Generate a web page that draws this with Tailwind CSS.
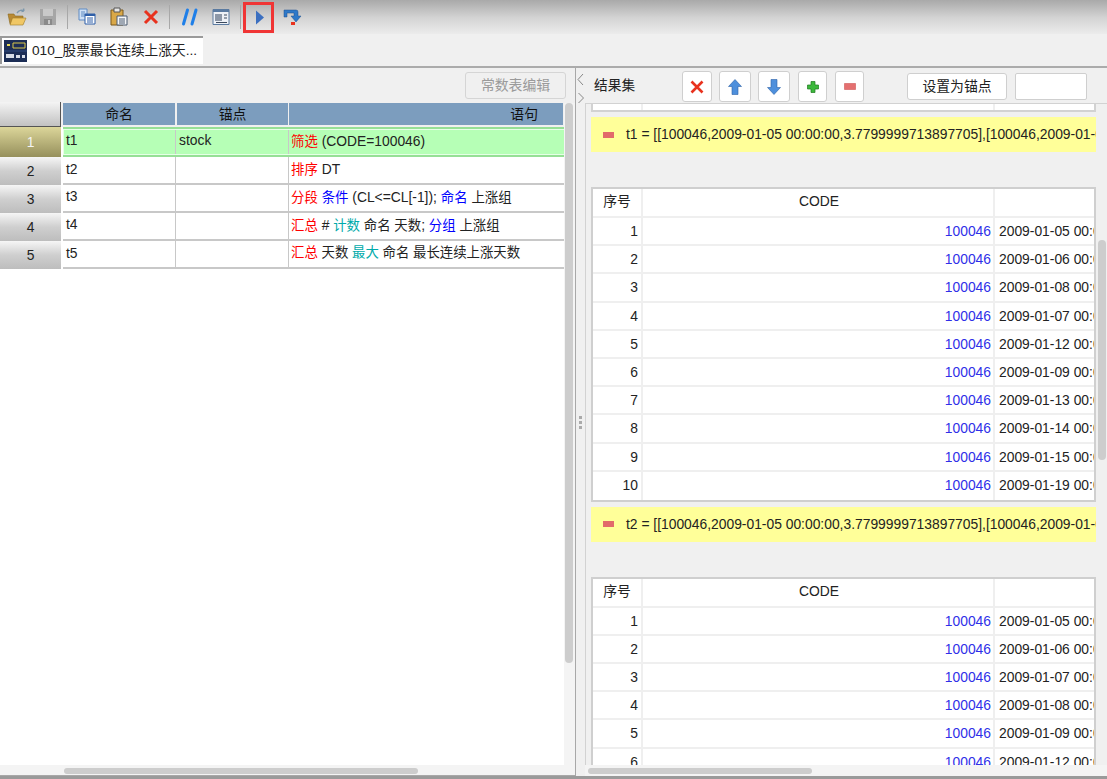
<!DOCTYPE html>
<html lang="zh">
<head>
    <meta charset="UTF-8">
    <title>010_股票最长连续上涨天数</title>
    <script src="https://cdn.jsdelivr.net/npm/@tailwindcss/browser@4"></script>
</head>
<body class="h-[779px] w-[1107px] overflow-hidden bg-[#f0f0f0] text-[13.85px] text-[#222] font-['Liberation_Sans','Noto_Sans_CJK_SC',sans-serif]">

    <!-- toolbar -->
    <div class="flex h-[34px] items-center bg-gradient-to-b from-[#a9a9a9] via-[#d2d2d2] to-[#ececec] pl-[7px]">
        <svg class="w-[20px] h-[20px]" viewBox="0 0 20 20">
            <path d="M1 7h6l1 2h8v8H3z" fill="#b98a34" stroke="#8a6a20" stroke-width=".6"/>
            <path d="M3 18l2.500-7H19l-3 7z" fill="#f0c765" stroke="#a07c28" stroke-width=".6"/>
            <path d="M10 6c2-3 5-3.500 7-2M17 4l-.5-2.500M17 4l-2.500.5" fill="none" stroke="#7c97ab" stroke-width="1.400"/>
        </svg>
        <svg class="ml-[11px] w-[20px] h-[20px]" viewBox="0 0 20 20"><path d="M2 2h16v16H2z" fill="#a6a6a6"/><path d="M5 2h10v7H5z" fill="#c9c9c9"/><path d="M6 12h8v6H6z" fill="#8a8a8a"/><path d="M10 13h2v4h-2z" fill="#c9c9c9"/></svg>
        <div class="ml-[9px] h-[24px] w-px bg-[#a8a8a8]"></div>
        <svg class="ml-[9px] w-[20px] h-[20px]" viewBox="0 0 20 20"><path d="M2 2h8v11H2z" fill="#cfe0f5" stroke="#5f8bc4"/><path d="M4 5h4M4 7h4M4 9h4" stroke="#5f8bc4"/><path d="M8 7h10v10H8z" fill="#fff" stroke="#2f5fa8"/><path d="M8 7h10v2H8z" fill="#2f5fa8"/><path d="M10 11h6M10 13h6M10 15h6" stroke="#2f5fa8"/></svg>
        <svg class="ml-[12px] w-[20px] h-[20px]" viewBox="0 0 20 20"><path d="M2 3h12v15H2z" fill="#d9a848" stroke="#7d5a1c"/><path d="M5 1h6v4H5z" fill="#e8e8e8" stroke="#555"/><path d="M8 9h10v9H8z" fill="#f4f6f8" stroke="#4a5a70"/><path d="M10 12h6M10 14h6M10 16h6" stroke="#4a5a70"/></svg>
        <svg class="ml-[12px] w-[20px] h-[20px]" viewBox="0 0 20 20"><path d="M4 4L16 16M16 4L4 16" stroke="#e8321e" stroke-width="3"/></svg>
        <div class="ml-[8px] h-[24px] w-px bg-[#a8a8a8]"></div>
        <svg class="ml-[10px] w-[20px] h-[20px]" viewBox="0 0 20 20"><path d="M7.500 3L3.500 17M16 3L12 17" stroke="#1f7fe8" stroke-width="3" stroke-linecap="round"/></svg>
        <svg class="ml-[11px] w-[20px] h-[20px]" viewBox="0 0 20 20"><path d="M2 2.500h16v15H2z" fill="#eef1f6" stroke="#5a7aa0"/><path d="M2 2.500h16v2.500H2z" fill="#5a7aa0"/><path d="M4 7h7v7H4z" fill="#8d98a8"/><path d="M13 8h3M13 11h3M5 15.500h11" stroke="#3c4a5e"/></svg>
        <div class="ml-[9px] h-[24px] w-px bg-[#a8a8a8]"></div>
        <div class="ml-[2px] flex h-[31px] w-[31px] items-center justify-center border-[3px] border-[#f03535]">
            <svg class="ml-[3px] w-[10px] h-[15px]" viewBox="0 0 10 15"><path d="M1 .5L9 7.500 1 14.500z" fill="#3b6fc0"/></svg>
        </div>
        <svg class="ml-[8px] w-[20px] h-[20px]" viewBox="0 0 20 20">
            <path d="M2 3h12q2 0 2 2v4h3l-5 6-5-6h3V6H5v4H2z" fill="#2f79c8" stroke="#1d4f8c" stroke-width=".5"/>
            <path d="M9 15h4v3H9z" fill="#e8321e"/>
        </svg>
    </div>

    <!-- tab strip -->
    <div class="h-[34px] border-b-[2px] border-[#ababab] pt-[2px]">
        <div class="flex h-[28px] w-[203px] items-center border-t-2 border-l-2 border-[#9a9a9a] bg-white pl-[2px]">
            <svg class="w-[23px] h-[22px] shrink-0" viewBox="0 0 23 22">
                <path d="M0 0h23v22H0z" fill="#1c2d55"/>
                <path d="M9 3h12v5H9z" fill="none" stroke="#d9c84a"/>
                <path d="M3 4h3v2H3z" fill="#e6d85a"/>
                <path d="M0 11h23" stroke="#2f4a80"/>
                <path d="M2 14h8v4H2zM12 15h4v3h-4zM18 15h3v3h-3z" fill="#d8dde8"/>
            </svg>
            <span class="ml-[5px] whitespace-nowrap text-[13.7px]">010_股票最长连续上涨天...</span>
        </div>
    </div>

    <div class="flex h-[708px]">

        <!-- left pane -->
        <div class="relative w-[576px] shrink-0 border-r border-b border-[#a8a8a8]">
            <div class="flex h-[34px] justify-end pr-[9px] pt-[4px]">
                <div class="flex h-[27px] w-[101px] items-center justify-center rounded-[3px] border border-[#d5d5d5] bg-[#f0f0f0] text-[#9a9a9a]">常数表编辑</div>
            </div>
            <div class="flex h-[663px] flex-col overflow-hidden bg-white">
                <div class="grid grid-cols-[61px_2px_112px_2px_111px_1px_274px] bg-[#f0f0f0] h-[25px]">
                    <div class="bg-gradient-to-b from-[#f4f4f4] to-[#c2c2c2] border-r border-b border-[#555]"></div>
                    <div></div>
                    <div class="mt-[1px] h-[22px] bg-[#7c9dbe] text-center leading-[22px] text-[#111]">命名</div>
                    <div></div>
                    <div class="mt-[1px] h-[22px] bg-[#7c9dbe] text-center leading-[22px] text-[#111]">锚点</div>
                    <div></div>
                    <div class="mt-[1px] h-[22px] bg-[#7c9dbe] pr-[25px] text-right leading-[22px] text-[#111]">语句</div>
                </div>

                <!-- row 1, selected -->
                <div class="flex h-[30px]">
                    <div class="flex w-[61px] items-center justify-center bg-gradient-to-b from-[#dcd69a] to-[#96905c] text-[#f4f4f4]">1</div>
                    <div class="ml-[2px] w-[501px] border-y-[2px] border-[#96e096]">
                        <div class="flex h-full border-y border-l border-[#e6ffe6] bg-[#b6ffb6]">
                            <div class="w-[112px] border-r border-[#c8c8c8] pl-[2px]">t1</div>
                            <div class="w-[113px] border-r border-[#c8c8c8] pl-[3px]">stock</div>
                            <div class="pl-[2px] pt-[1px]"><span class="text-[13.4px] text-[#f00]">筛选</span> (CODE=100046)</div>
                        </div>
                    </div>
                </div>

                <div class="flex h-[28px]">
                    <div class="flex w-[61px] items-center justify-center bg-gradient-to-b from-[#f6f6f6] via-[#cfcfcf] to-[#bdbdbd]">2</div>
                    <div class="ml-[2px] flex w-[501px] border-b-[2px] border-[#c8c8c8]">
                        <div class="w-[113px] border-r border-[#c8c8c8] pl-[3px] pt-[2px]">t2</div>
                        <div class="w-[113px] border-r border-[#c8c8c8]"></div>
                        <div class="pl-[2px] pt-[2px]"><span class="text-[13.4px] text-[#f00]">排序</span> DT</div>
                    </div>
                </div>
                <div class="flex h-[28px]">
                    <div class="flex w-[61px] items-center justify-center bg-gradient-to-b from-[#f6f6f6] via-[#cfcfcf] to-[#bdbdbd]">3</div>
                    <div class="ml-[2px] flex w-[501px] border-b-[2px] border-[#c8c8c8]">
                        <div class="w-[113px] border-r border-[#c8c8c8] pl-[3px] pt-[1px]">t3</div>
                        <div class="w-[113px] border-r border-[#c8c8c8]"></div>
                        <div class="pl-[2px] pt-[2px]"><span class="text-[13.4px] text-[#f00]">分段</span> <span class="text-[13.4px] text-[#00f]">条件</span> (CL&lt;=CL[-1]); <span class="text-[13.4px] text-[#00f]">命名</span> <span class="text-[13.4px]">上涨组</span></div>
                    </div>
                </div>
                <div class="flex h-[28px]">
                    <div class="flex w-[61px] items-center justify-center bg-gradient-to-b from-[#f6f6f6] via-[#cfcfcf] to-[#bdbdbd]">4</div>
                    <div class="ml-[2px] flex w-[501px] border-b-[2px] border-[#c8c8c8]">
                        <div class="w-[113px] border-r border-[#c8c8c8] pl-[3px] pt-[1px]">t4</div>
                        <div class="w-[113px] border-r border-[#c8c8c8]"></div>
                        <div class="pl-[2px] pt-[2px]"><span class="text-[13.4px] text-[#f00]">汇总</span> # <span class="text-[13.4px] text-[#00aaaa]">计数</span> <span class="text-[13.4px]">命名 天数</span>; <span class="text-[13.4px] text-[#00f]">分组</span> <span class="text-[13.4px]">上涨组</span></div>
                    </div>
                </div>
                <div class="flex h-[28px]">
                    <div class="flex w-[61px] items-center justify-center bg-gradient-to-b from-[#f6f6f6] via-[#cfcfcf] to-[#bdbdbd]">5</div>
                    <div class="ml-[2px] flex w-[501px] border-b-[2px] border-[#c8c8c8]">
                        <div class="w-[113px] border-r border-[#c8c8c8] pl-[3px] pt-[2px]">t5</div>
                        <div class="w-[113px] border-r border-[#c8c8c8]"></div>
                        <div class="pl-[2px] pt-[2px] text-[13.4px]"><span class="text-[#f00]">汇总</span> 天数 <span class="text-[#00aaaa]">最大</span> 命名 最长连续上涨天数</div>
                    </div>
                </div>
            </div>
            <!-- scrollbars -->
            <div class="absolute top-[35px] bottom-[10px] right-0 w-[11px] bg-[#f4f4f4]">
                <div class="ml-[1px] h-[560px] w-[8px] rounded-[4px] bg-[#cdcdcd]"></div>
            </div>
            <div class="absolute inset-x-0 bottom-0 h-[10px] bg-[#f4f4f4]">
                <div class="ml-[64px] mt-[3px] h-[6px] w-[354px] rounded-[3px] bg-[#cdcdcd]"></div>
            </div>
        </div>

        <!-- splitter -->
        <div class="relative w-[9px] shrink-0">
            <svg class="absolute left-0 top-0 w-[9px] h-[38px]" viewBox="0 0 9 38" fill="none" stroke="#888" stroke-width="1"><path d="M7 6L2 11.500 7 17M2.500 25L7.500 30 2.500 35"/></svg>
            <div class="absolute left-[3px] top-[348px] flex flex-col gap-[2px]">
                <div class="h-[3px] w-[3px] bg-[#aaa]"></div>
                <div class="h-[3px] w-[3px] bg-[#aaa]"></div>
                <div class="h-[3px] w-[3px] bg-[#aaa]"></div>
            </div>
        </div>

        <!-- result pane -->
        <div class="relative flex-1">
            <div class="flex h-[35px] items-center pt-[2px]">
                <span class="ml-[9px] w-[88px] text-[13.7px]">结果集</span>
                <div class="flex h-[31px] w-[30px] items-center justify-center rounded-[3px] border border-[#cfcfcf] bg-white">
                    <svg class="w-[16px] h-[16px]" viewBox="0 0 16 16"><path d="M2.500 2.500l11 11M13.500 2.500l-11 11" stroke="#e8321e" stroke-width="2.600"/></svg>
                </div>
                <div class="ml-[7px] flex h-[31px] w-[32px] items-center justify-center rounded-[3px] border border-[#cfcfcf] bg-white">
                    <svg class="w-[14px] h-[16px]" viewBox="0 0 14 16"><path d="M7 .5l6.500 7H10v8H4v-8H.5z" fill="#4d8fdc" stroke="#2c62a8" stroke-width=".6"/></svg>
                </div>
                <div class="ml-[7px] flex h-[31px] w-[32px] items-center justify-center rounded-[3px] border border-[#cfcfcf] bg-white">
                    <svg class="w-[14px] h-[16px]" viewBox="0 0 14 16"><path d="M7 15.500l6.500-7H10v-8H4v8H.5z" fill="#4d8fdc" stroke="#2c62a8" stroke-width=".6"/></svg>
                </div>
                <div class="ml-[8px] flex h-[31px] w-[29px] items-center justify-center rounded-[3px] border border-[#cfcfcf] bg-white">
                    <svg class="w-[12px] h-[12px]" viewBox="0 0 12 12"><path d="M4 .5h4v3.500h3.500v4H8v3.500H4V8H.5V4H4z" fill="#3cb83c" stroke="#1e7a1e" stroke-width=".7"/></svg>
                </div>
                <div class="ml-[8px] flex h-[31px] w-[29px] items-center justify-center rounded-[3px] border border-[#cfcfcf] bg-white">
                    <svg class="w-[12px] h-[7px]" viewBox="0 0 12 7"><path d="M.5.5h11v6H.5z" fill="#e47070" stroke="#cf5656" stroke-width=".6"/></svg>
                </div>
                <div class="ml-[43px] flex h-[27px] w-[100px] items-center justify-center rounded-[3px] border border-[#cfcfcf] bg-white">设置为锚点</div>
                <div class="ml-[8px] h-[27px] w-[72px] rounded-[2px] border border-[#cfcfcf] bg-white"></div>
            </div>

            <div class="h-[662px] overflow-hidden border-l border-t border-[#d2d2d2] pl-[5px]">
                <div class="flex h-[8px] w-[505px] border-x-[2px] border-b-[2px] border-[#d2d2d2] bg-white">
                    <div class="w-[50px] border-r-[2px] border-[#efefef]"></div>
                    <div class="w-[352px] border-r-[2px] border-[#efefef]"></div>
                </div>
                <div class="mt-[5px] flex h-[35px] w-[505px] items-center overflow-hidden whitespace-nowrap bg-[#ffff99] pl-[12px]">
                    <span class="h-[6px] w-[11px] shrink-0 bg-[#e26a6a]"></span>
                    <span class="ml-[12px]">t1 = [[100046,2009-01-05 00:00:00,3.7799999713897705],[100046,2009-01-05 00:00:00,3.77]]</span>
                </div>

                <div class="mt-[35px] w-[505px] overflow-hidden border-2 border-[#cfcfcf] bg-white">
                    <div class="flex h-[29px] border-b-[2px] border-[#efefef]">
                        <div class="w-[50px] shrink-0 border-r-[2px] border-[#efefef] text-center leading-[24px]">序号</div>
                        <div class="w-[352px] shrink-0 border-r-[2px] border-[#efefef] pl-[2px] text-center leading-[24px]">CODE</div>
                    </div>
                    <div id="rows1"></div>
                </div>

                <div class="mt-[5px] flex h-[35px] w-[505px] items-center overflow-hidden whitespace-nowrap bg-[#ffff99] pl-[12px]">
                    <span class="h-[6px] w-[11px] shrink-0 bg-[#e26a6a]"></span>
                    <span class="ml-[12px]">t2 = [[100046,2009-01-05 00:00:00,3.7799999713897705],[100046,2009-01-05 00:00:00,3.77]]</span>
                </div>

                <div class="mt-[35px] w-[505px] overflow-hidden border-x-[2px] border-t-[2px] border-[#cfcfcf] bg-white">
                    <div class="flex h-[29px] border-b-[2px] border-[#efefef]">
                        <div class="w-[50px] shrink-0 border-r-[2px] border-[#efefef] text-center leading-[24px]">序号</div>
                        <div class="w-[352px] shrink-0 border-r-[2px] border-[#efefef] pl-[2px] text-center leading-[24px]">CODE</div>
                    </div>
                    <div id="rows2"></div>
                </div>
            </div>

            <!-- scrollbars -->
            <div class="absolute right-[1px] top-[172px] h-[220px] w-[8px] rounded-[4px] bg-[#cdcdcd]"></div>
            <div class="absolute inset-x-0 bottom-0 h-[11px] bg-[#f4f4f4]">
                <div class="ml-[3px] mt-[3px] h-[6px] w-[224px] rounded-[3px] bg-[#cdcdcd]"></div>
            </div>
        </div>
    </div>

    <div class="h-[3px] bg-[#9a9a9a]"></div>

    <script>
        const dates1 = ['05', '06', '08', '07', '12', '09', '13', '14', '15', '19'];
        const dates2 = ['05', '06', '07', '08', '09', '12'];

        function fillRows(id, dates) {
            document.getElementById(id).innerHTML = dates.map((d, i) => `
                <div class="flex h-[28.2px] border-b-[2px] border-[#efefef] last:h-[28px] last:border-b-0">
                    <div class="w-[50px] shrink-0 border-r-[2px] border-[#efefef] pr-[3px] text-right leading-[26px]">${i + 1}</div>
                    <div class="w-[352px] shrink-0 border-r-[2px] border-[#efefef] pr-[2px] text-right leading-[26px] text-[#2f2fe8]">100046</div>
                    <div class="pl-[4px] whitespace-nowrap leading-[26px]">2009-01-${d} 00:00:00</div>
                </div>`).join('');
        }

        fillRows('rows1', dates1);
        fillRows('rows2', dates2);
    </script>
</body>
</html>
